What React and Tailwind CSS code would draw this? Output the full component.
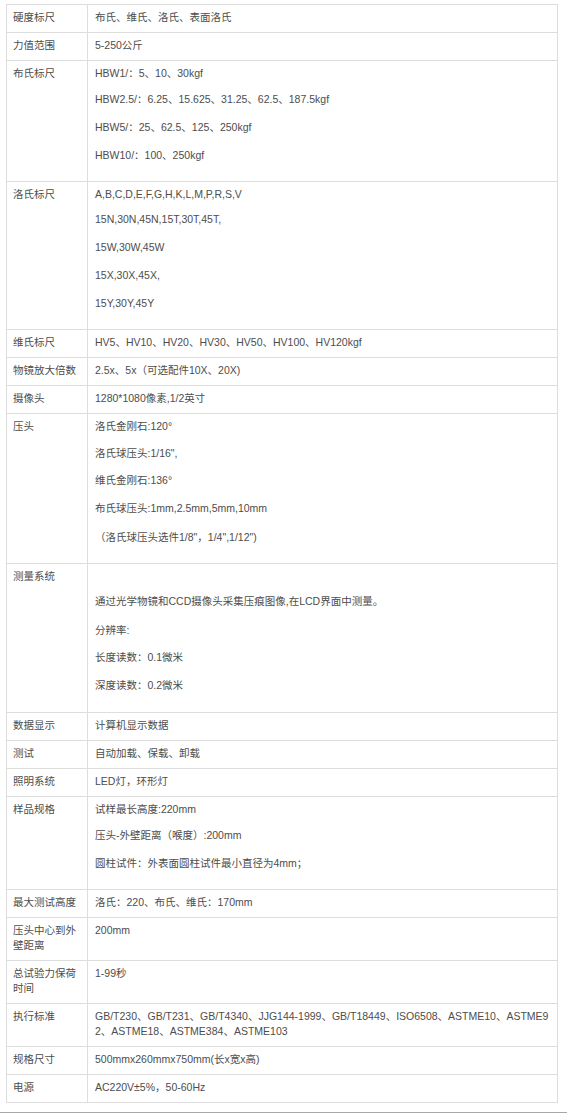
const rows = [
  { label: "硬度标尺", lines: ["布氏、维氏、洛氏、表面洛氏"] },
  { label: "力值范围", lines: ["5-250公斤"] },
  {
    label: "布氏标尺",
    lines: [
      "HBW1/：5、10、30kgf",
      "HBW2.5/：6.25、15.625、31.25、62.5、187.5kgf",
      "HBW5/：25、62.5、125、250kgf",
      "HBW10/：100、250kgf",
    ],
    gaps: [11, 13, 13],
  },
  {
    label: "洛氏标尺",
    lines: [
      "A,B,C,D,E,F,G,H,K,L,M,P,R,S,V",
      "15N,30N,45N,15T,30T,45T,",
      "15W,30W,45W",
      "15X,30X,45X,",
      "15Y,30Y,45Y",
    ],
    gaps: [10, 13, 13, 13],
  },
  { label: "维氏标尺", lines: ["HV5、HV10、HV20、HV30、HV50、HV100、HV120kgf"] },
  { label: "物镜放大倍数", lines: ["2.5x、5x（可选配件10X、20X)"] },
  { label: "摄像头", lines: ["1280*1080像素,1/2英寸"] },
  {
    label: "压头",
    lines: [
      "洛氏金刚石:120°",
      "洛氏球压头:1/16\",",
      "维氏金刚石:136°",
      "布氏球压头:1mm,2.5mm,5mm,10mm",
      "（洛氏球压头选件1/8\"，1/4\",1/12\")",
    ],
    gaps: [12, 12, 13, 14],
  },
  {
    label: "测量系统",
    lines: [
      "",
      "通过光学物镜和CCD摄像头采集压痕图像,在LCD界面中测量。",
      "分辨率:",
      "长度读数：0.1微米",
      "深度读数：0.2微米",
    ],
    gaps: [10, 14, 12, 13],
    extra: 12,
  },
  { label: "数据显示", lines: ["计算机显示数据"] },
  { label: "测试", lines: ["自动加载、保载、卸载"] },
  { label: "照明系统", lines: ["LED灯，环形灯"] },
  {
    label: "样品规格",
    lines: [
      "试样最长高度:220mm",
      "压头-外壁距离（喉度）:200mm",
      "圆柱试件：外表面圆柱试件最小直径为4mm；",
    ],
    gaps: [11, 13],
  },
  { label: "最大测试高度", lines: ["洛氏：220、布氏、维氏：170mm"] },
  { label: "压头中心到外壁距离", lines: ["200mm"] },
  { label: "总试验力保荷时间", lines: ["1-99秒"] },
  {
    label: "执行标准",
    wrap: [
      "GB/T230、GB/T231、GB/T4340、JJG144-1999、GB/T18449、ISO6508、ASTME10、ASTME9",
      "2、ASTME18、ASTME384、ASTME103",
    ],
  },
  { label: "规格尺寸", lines: ["500mmx260mmx750mm(长x宽x高)"] },
  { label: "电源", lines: ["AC220V±5%，50-60Hz"] },
];

const ValueCell = ({ row }) => {
  if (row.wrap) {
    return (
      <div>
        {row.wrap.map((t, i) => (
          <div key={i} className="whitespace-nowrap">{t}</div>
        ))}
      </div>
    );
  }
  if (row.lines.length === 1) return <div>{row.lines[0]}</div>;
  return (
    // multi-paragraph cells get extra space under the last line
    <div style={{ paddingBottom: row.extra || 11 }}>
      {row.lines.map((t, i) => (
        <div
          key={i}
          className="h-[15px] whitespace-nowrap"
          style={{ marginTop: i === 0 ? 0 : row.gaps[i - 1] }}
        >
          {t}
        </div>
      ))}
    </div>
  );
};

const App = () => {
  return (
    <div
      className="w-[567px] h-[1114px] bg-white relative"
      style={{ fontFamily: '"Liberation Sans", Arial, "Noto Sans CJK SC", sans-serif' }}
    >
      <div className="pt-[4px] pl-[6px]">
        <table className="w-[552px] border-collapse text-[10.5px] leading-[15px] text-[#4d4d4d]">
          <tbody>
            {rows.map((row, i) => (
              <tr key={i}>
                <td className="w-[81px] border border-[#dddddd] pl-[6px] pr-[4px] pt-[5px] pb-[7px] align-top">
                  {row.label}
                </td>
                <td className="border border-[#dddddd] pl-[7px] pr-[4px] pt-[5px] pb-[7px] align-top">
                  <ValueCell row={row} />
                </td>
              </tr>
            ))}
          </tbody>
        </table>
      </div>
      <div className="absolute left-0 right-0 top-[1112px] h-[1px] bg-[#a8a8a8]" />
    </div>
  );
};

export default App;
